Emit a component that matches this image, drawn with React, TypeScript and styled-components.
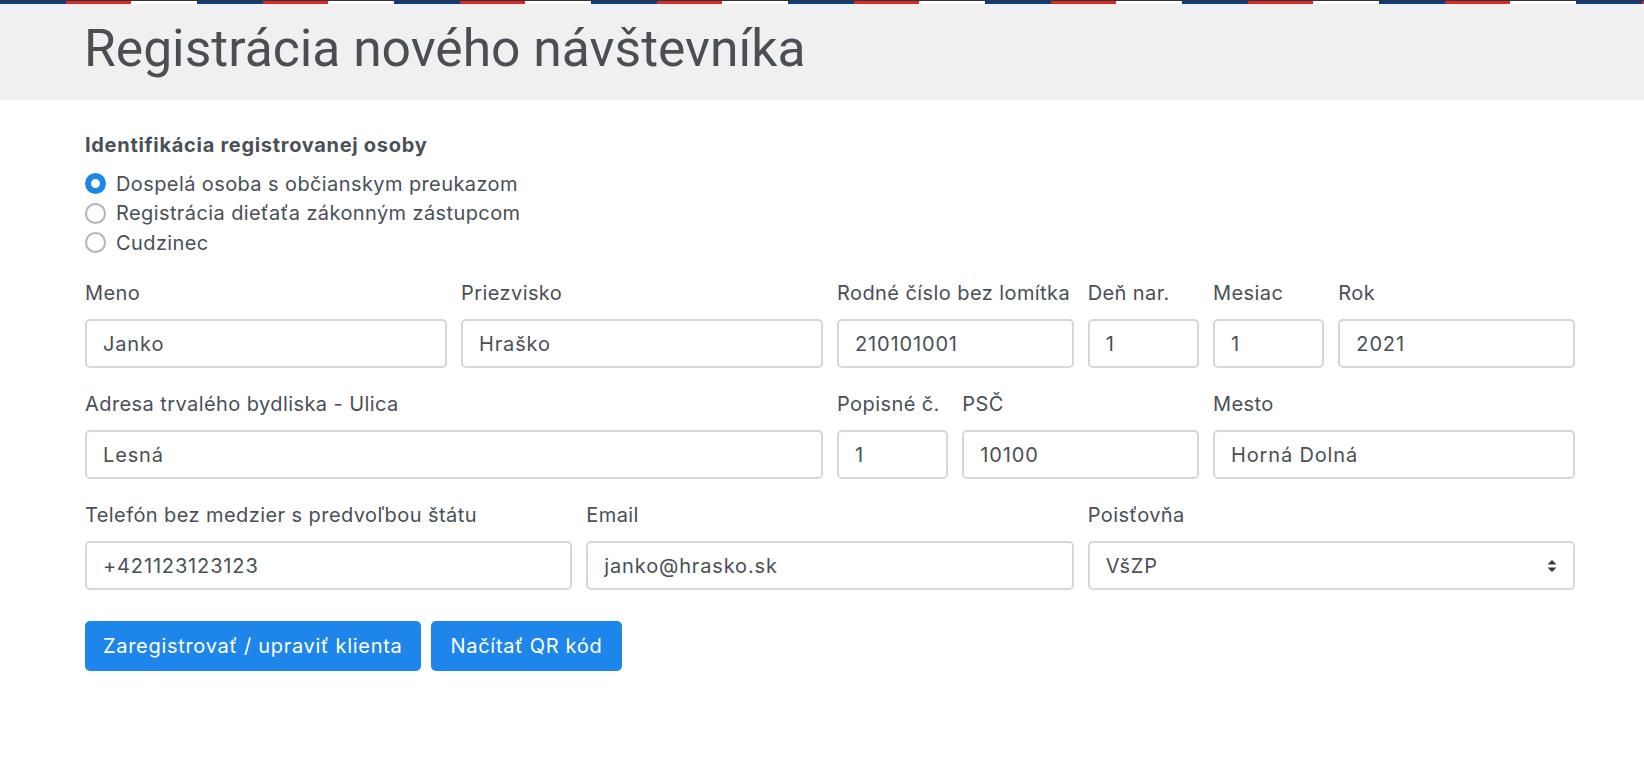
import React from "react";
import styled, { createGlobalStyle } from "styled-components";

const GlobalStyle = createGlobalStyle`
  body {
    margin: 0;
    background: #ffffff;
    font-family: Inter, "Noto Sans", sans-serif;
    color: #495057;
  }
  * { box-sizing: border-box; }
`;

// slovenská trikolóra hore
const FlagStripe = styled.div`
  height: 4px;
  border-top: 1px solid #333333;
  background: repeating-linear-gradient(
    90deg,
    #0d3b85 0 66px,
    #d52b2b 66px 131px,
    #ffffff 131px 197px
  );
`;

const HeaderBar = styled.header`
  background-color: #f0f0f0;
  height: 96px;
  display: flex;
  align-items: center;
  padding: 0 69px 0 84px;
`;

const Title = styled.h1`
  margin: 0;
  font-family: Roboto, "Liberation Sans", sans-serif;
  font-weight: 400;
  font-size: 51.6px;
  line-height: 1;
  color: #4a4f56;
  padding-bottom: 6px;
`;

const Main = styled.main`
  padding: 33px 69px 40px 85px;
`;

const SectionTitle = styled.div`
  font-size: 20px;
  line-height: 24px;
  font-weight: 700;
  letter-spacing: 0.7px;
  color: #495057;
`;

const RadioGroup = styled.div`
  margin-top: 12px;
  display: flex;
  flex-direction: column;
`;

const RadioRow = styled.label`
  display: flex;
  align-items: center;
  height: 29.5px;
  gap: 10px;
  font-size: 20px;
  letter-spacing: 0.4px;
  color: #495057;
  cursor: pointer;
`;

const RadioMark = styled.span<{ $checked?: boolean }>`
  width: 21px;
  height: 21px;
  border-radius: 50%;
  flex-shrink: 0;
  border: ${(p) => (p.$checked ? "6.5px solid #1e86ea" : "2px solid #adb5bd")};
  background: #ffffff;
`;

const FieldGrid = styled.div`
  margin-top: 23px;
  display: grid;
  grid-template-columns: repeat(12, 1fr);
  column-gap: 14px;
  row-gap: 23.5px;
`;

const Field = styled.div<{ $span: number }>`
  grid-column: span ${(p) => p.$span};
  display: flex;
  flex-direction: column;
  min-width: 0;
`;

const Label = styled.label`
  font-size: 20px;
  line-height: 24px;
  letter-spacing: 0.42px;
  color: #495057;
  margin-bottom: 14.5px;
  white-space: nowrap;
`;

const Input = styled.input`
  height: 49px;
  width: 100%;
  border: 2px solid #d2d8de;
  border-radius: 5px;
  padding: 0 16px;
  font-family: Inter, "Noto Sans", sans-serif;
  font-size: 20px;
  letter-spacing: 0.85px;
  color: #495057;
  background: #ffffff;
  outline: none;
`;

const SelectWrap = styled.div`
  position: relative;
`;

const Select = styled.select`
  appearance: none;
  height: 49px;
  width: 100%;
  border: 2px solid #d2d8de;
  border-radius: 5px;
  padding: 0 40px 0 16px;
  font-family: Inter, "Noto Sans", sans-serif;
  font-size: 20px;
  letter-spacing: 0.85px;
  color: #495057;
  background: #ffffff;
  outline: none;
`;

const SelectArrows = styled.svg`
  position: absolute;
  right: 18px;
  top: 50%;
  transform: translateY(-50%);
  pointer-events: none;
`;

const Actions = styled.div`
  margin-top: 31px;
  display: flex;
  gap: 10px;
`;

const Button = styled.button<{ $pad: number }>`
  height: 50px;
  padding: 0 ${(p) => p.$pad}px;
  border: none;
  border-radius: 5px;
  background-color: #1e86ea;
  color: #ffffff;
  font-family: Inter, "Noto Sans", sans-serif;
  font-weight: 400;
  font-size: 20px;
  letter-spacing: 0.7px;
  cursor: pointer;
`;

const radios = [
  { label: "Dospelá osoba s občianskym preukazom", checked: true },
  { label: "Registrácia dieťaťa zákonným zástupcom", checked: false },
  { label: "Cudzinec", checked: false },
];

const fields: { label: string; value: string; span: number }[] = [
  { label: "Meno", value: "Janko", span: 3 },
  { label: "Priezvisko", value: "Hraško", span: 3 },
  { label: "Rodné číslo bez lomítka", value: "210101001", span: 2 },
  { label: "Deň nar.", value: "1", span: 1 },
  { label: "Mesiac", value: "1", span: 1 },
  { label: "Rok", value: "2021", span: 2 },
  { label: "Adresa trvalého bydliska - Ulica", value: "Lesná", span: 6 },
  { label: "Popisné č.", value: "1", span: 1 },
  { label: "PSČ", value: "10100", span: 2 },
  { label: "Mesto", value: "Horná Dolná", span: 3 },
  { label: "Telefón bez medzier s predvoľbou štátu", value: "+421123123123", span: 4 },
  { label: "Email", value: "janko@hrasko.sk", span: 4 },
];

const App: React.FC = () => {
  return (
    <>
      <GlobalStyle />
      <FlagStripe />
      <HeaderBar>
        <Title>Registrácia nového návštevníka</Title>
      </HeaderBar>

      <Main>
        <SectionTitle>Identifikácia registrovanej osoby</SectionTitle>
        <RadioGroup>
          {radios.map((r) => (
            <RadioRow key={r.label}>
              <RadioMark $checked={r.checked} />
              {r.label}
            </RadioRow>
          ))}
        </RadioGroup>

        <FieldGrid>
          {fields.map((f) => (
            <Field key={f.label} $span={f.span}>
              <Label>{f.label}</Label>
              <Input defaultValue={f.value} />
            </Field>
          ))}
          <Field $span={4}>
            <Label>Poisťovňa</Label>
            <SelectWrap>
              <Select defaultValue="VšZP">
                <option>VšZP</option>
                <option>Dôvera</option>
                <option>Union</option>
              </Select>
              <SelectArrows width="10" height="14" viewBox="0 0 10 14">
                <path d="M5 1 L9.5 5.5 H0.5 Z" fill="#343a40" />
                <path d="M5 13 L9.5 8.5 H0.5 Z" fill="#343a40" />
              </SelectArrows>
            </SelectWrap>
          </Field>
        </FieldGrid>

        <Actions>
          <Button $pad={18}>Zaregistrovať / upraviť klienta</Button>
          <Button $pad={20}>Načítať QR kód</Button>
        </Actions>
      </Main>
    </>
  );
};

export default App;
